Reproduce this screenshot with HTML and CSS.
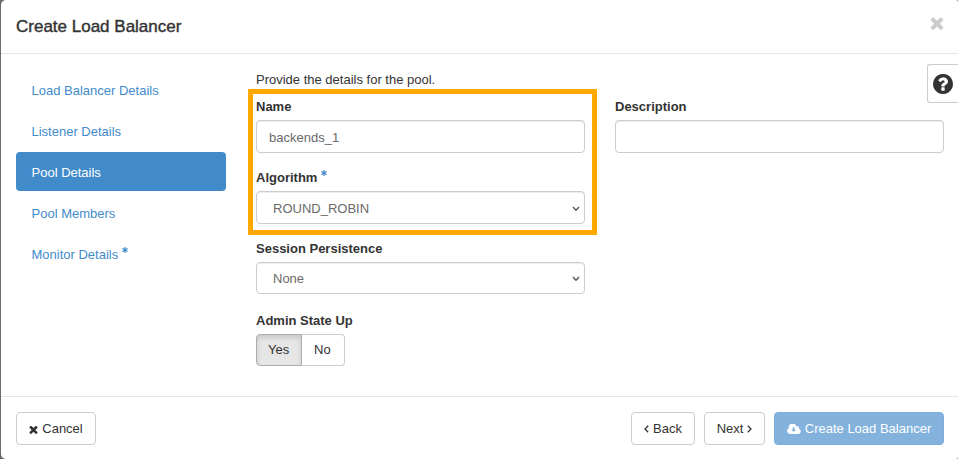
FILE: index.html
```html
<!DOCTYPE html>
<html lang="en">
<head>
<meta charset="utf-8">
<title>Create Load Balancer</title>
<link rel="stylesheet" href="styles.css">
</head>
<body>
<svg width="0" height="0" class="defs">
  <symbol id="times" viewBox="302 238 1188 1316"><path d="M1490 1322q0 40-28 68l-136 136q-28 28-68 28t-68-28l-294-294-294 294q-28 28-68 28t-68-28l-136-136q-28-28-28-68t28-68l294-294-294-294q-28-28-28-68t28-68l136-136q28-28 68-28t68 28l294 294 294-294q28-28 68-28t68 28l136 136q28 28 28 68t-28 68l-294 294 294 294q28 28 28 68z"/></symbol>
  <symbol id="asterisk" viewBox="0 0 12 12"><path d="M6 1v10M1.7 3.5l8.6 5M10.3 3.5l-8.6 5" fill="none" stroke="currentColor" stroke-width="2.6" stroke-linecap="round"/></symbol>
  <symbol id="chevron" viewBox="0 0 8 6"><path d="M1 1l3 3.2L7 1" fill="none" stroke="currentColor" stroke-width="1.4"/></symbol>
</svg>
<div class="modal">
  <header class="modal-header">
    <h1>Create Load Balancer</h1>
    <svg class="close"><use href="#times"/></svg>
  </header>
  <main class="modal-body">
    <nav class="steps">
      <a>Load Balancer Details</a>
      <a>Listener Details</a>
      <a class="active">Pool Details</a>
      <a>Pool Members</a>
      <a>Monitor Details<svg class="required"><use href="#asterisk"/></svg></a>
    </nav>
    <section class="content">
      <p>Provide the details for the pool.</p>
      <div class="columns">
        <div class="column">
          <div class="highlight"></div>
          <div class="field"><label>Name</label><div class="control"><span>backends_1</span></div></div>
          <div class="field"><label>Algorithm<svg class="required"><use href="#asterisk"/></svg></label><div class="control select"><span>ROUND_ROBIN</span><svg class="chevron"><use href="#chevron"/></svg></div></div>
          <div class="field"><label>Session Persistence</label><div class="control select short"><span>None</span><svg class="chevron"><use href="#chevron"/></svg></div></div>
          <div class="field"><label>Admin State Up</label><div class="toggle"><button class="on">Yes</button><button>No</button></div></div>
        </div>
        <div class="column">
          <div class="field"><label>Description</label><div class="control"></div></div>
        </div>
      </div>
    </section>
    <div class="help">
      <svg viewBox="128 128 1536 1536"><path d="M1024 1376v-192q0-14-9-23t-23-9h-192q-14 0-23 9t-9 23v192q0 14 9 23t23 9h192q14 0 23-9t9-23zm256-672q0-88-55.5-163t-138.5-116-170-41q-243 0-371 213-15 24 8 42l132 100q7 6 19 6 16 0 25-12 53-68 86-92 34-24 86-24 48 0 85.5 26t37.5 59q0 38-20 61t-68 45q-63 28-115.5 86.5t-52.5 125.5v36q0 14 9 23t23 9h192q14 0 23-9t9-23q0-19 21.5-49.5t54.5-49.5q32-18 49-28.5t46-35 44.5-48 28-60.5 12.5-81zm384 192q0 209-103 385.5t-279.5 279.5-385.5 103-385.5-103-279.5-279.5-103-385.5 103-385.5 279.5-279.5 385.5-103 385.5 103 279.5 279.5 103 385.5z"/></svg>
    </div>
  </main>
  <footer class="modal-footer">
    <button class="btn cancel"><svg class="x"><use href="#times"/></svg><span>Cancel</span></button>
    <button class="btn back"><svg class="angle" viewBox="0 0 5 8"><path d="M4.2.8L1 4l3.200 3.200"/></svg><span>Back</span></button>
    <button class="btn next"><span>Next</span><svg class="angle" viewBox="0 0 5 8"><path d="M.8.8L4 4 .8 7.200"/></svg></button>
    <button class="btn primary"><svg class="cloud" viewBox="0 0 14 10"><path fill-rule="evenodd" d="M3 10a3 3 0 0 1-1.200-5.700A3.900 3.900 0 0 1 9.300 2.200 2.100 2.100 0 0 1 12 4.800 2.700 2.700 0 0 1 11.300 10zM5.800 3v2.500H4.200L6.600 8.100 9 5.500H7.400V3z"/></svg><span>Create Load Balancer</span></button>
  </footer>
</div>
</body>
</html>
```
FILE: styles.css
```css
* { box-sizing: border-box; }
body {
  margin: 0;
  height: 459px;
  overflow: hidden;
  background: #6b6b6d;
  color: #333;
  font: 13px/18px "Liberation Sans", Arial, sans-serif;
}
.defs { position: absolute; }
svg { display: block; flex: none; fill: currentColor; }
.modal {
  display: flex;
  flex-direction: column;
  height: 459px;
  margin-left: 1px;
  background: #fff;
  border-radius: 5px 2px 2px 5px;
}
.modal-header {
  display: flex;
  justify-content: space-between;
  height: 54px;
  padding: 15px 14px 0 15px;
  border-bottom: 1px solid #e5e5e5;
}
h1 {
  margin: 0;
  font-size: 17px;
  line-height: 24px;
  font-weight: 400;
  -webkit-text-stroke: 0.4px #333;
}
.close { width: 14px; height: 14px; margin-top: 1px; color: #ccc; }
.modal-body {
  display: flex;
  height: 342px;
  padding-left: 15px;
}
.steps {
  display: flex;
  flex-direction: column;
  gap: 2.2px;
  width: 210px;
  padding-top: 16px;
}
.steps a {
  display: flex;
  align-items: center;
  height: 39px;
  padding: 2px 15.5px 0;
  border-radius: 4px;
  color: #428bca;
}
.steps .active { background: #428bca; color: #fff; }
.required { width: 6px; height: 6px; margin: -11px 0 0 4px; color: #428bca; }
.content { width: 688px; margin-left: 30px; padding-top: 17px; }
p { margin: 0 0 9px; }
.columns { display: flex; gap: 30px; }
.column { position: relative; width: 329px; }
.highlight {
  position: absolute;
  left: -8px;
  top: -9px;
  width: 349px;
  height: 146px;
  border: 5px solid #ffa800;
}
.field { height: 71.2px; }
label { display: flex; align-items: center; height: 18px; margin-bottom: 4px; font-weight: 700; }
.control {
  display: flex;
  align-items: center;
  justify-content: space-between;
  height: 33px;
  padding: 2px 12px 0;
  border: 1px solid #ccc;
  border-radius: 4px;
  box-shadow: inset 0 1px 1px rgba(0, 0, 0, .075);
  color: #6a6a6a;
}
.select { padding: 2px 4px 0 16px; }
.short { height: 32px; }
.chevron { width: 8px; height: 6px; color: #555; }
.toggle { display: flex; height: 32px; }
button {
  display: flex;
  align-items: center;
  margin: 0;
  border: 1px solid #ccc;
  border-radius: 4px;
  background: #fff;
  color: #333;
  font: inherit;
}
.toggle button { width: 43px; padding: 1px 0 0 12px; border-left: 0; border-radius: 0 4px 4px 0; }
.toggle .on {
  width: 46px;
  border: 1px solid #adadad;
  border-radius: 4px 0 0 4px;
  background: #e6e6e6;
  box-shadow: inset 0 3px 5px rgba(0, 0, 0, .125);
}
.toggle .on { padding-left: 11px; }
.help {
  width: 31px;
  height: 39px;
  margin: 10px 0 0 -17px;
  padding: 9px 0 0 5px;
  border: 1px solid #ccc;
  border-right: 0;
  border-radius: 3px 0 0 3px;
  background: #fff;
}
.help svg { width: 20px; height: 20px; }
.modal-footer {
  display: flex;
  gap: 9px;
  height: 63px;
  padding: 15px 14px 0 15px;
  border-top: 1px solid #e5e5e5;
}
.btn { justify-content: center; gap: 4px; height: 33px; padding: 1px 0 0; white-space: nowrap; }
.cancel { width: 80px; margin-right: auto; }
.back { width: 64px; }
.next { width: 61px; }
.primary { width: 170px; background: #83b2dd; border-color: #7daedb; color: #fff; }
.x { width: 9px; height: 9px; }
.angle { width: 5px; height: 8px; fill: none; stroke: currentColor; stroke-width: 1.3; }
.cloud { width: 14px; height: 10px; }
```
